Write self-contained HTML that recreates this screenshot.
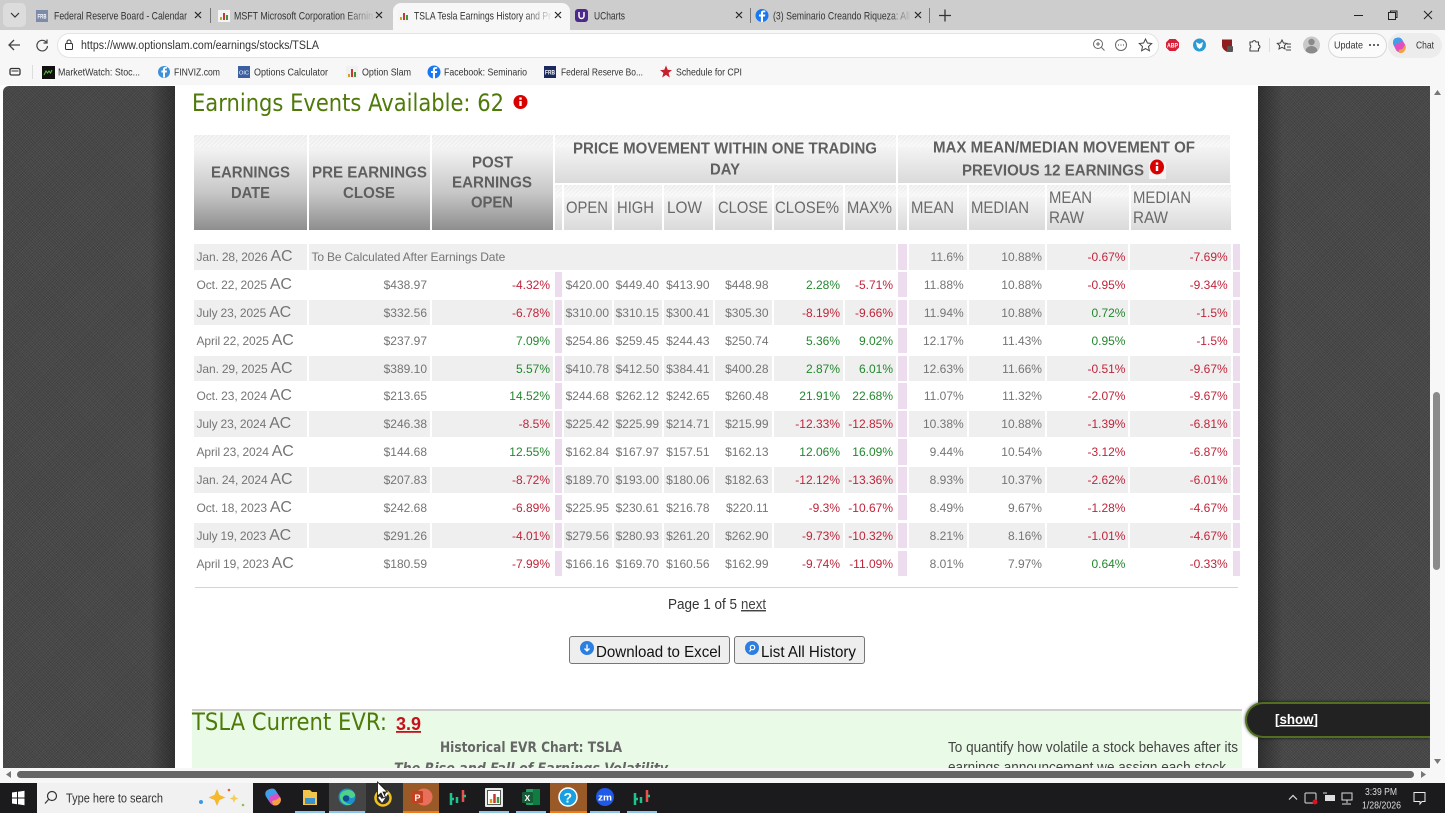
<!DOCTYPE html>
<html><head><meta charset="utf-8"><title>TSLA Tesla Earnings History</title>
<style>
html,body{margin:0;padding:0;width:1445px;height:813px;overflow:hidden;background:#f7f7f7;font-family:"Liberation Sans",sans-serif}
.a{position:absolute}
.dark{background-color:#525252;background-image:repeating-linear-gradient(45deg,rgba(0,0,0,.13) 0 1px,transparent 1px 2px),repeating-linear-gradient(-45deg,rgba(0,0,0,.13) 0 1px,transparent 1px 2px)}
.h{position:absolute;background-image:repeating-linear-gradient(135deg,rgba(255,255,255,.6) 0 1px,rgba(255,255,255,0) 1px 3px),linear-gradient(#ececec,#f5f5f5 22%,#dadada);background-size:100% 12px,100% 100%;background-repeat:no-repeat}
.h.k{background-image:repeating-linear-gradient(135deg,rgba(255,255,255,.6) 0 1px,rgba(255,255,255,0) 1px 3px),linear-gradient(#ececec,#f2f2f2 15%,#c8c8c8 60%,#8e8e8e)}
.r{position:absolute;left:194px;height:25.6px;display:grid;grid-template-columns:113px 121px 121px 6.5px 48.5px 48px 48.5px 57px 69.5px 51px 8.5px 58.2px 76.3px 81.5px 100.2px 7px;column-gap:2px;font-size:12px;line-height:26.6px;color:#757575}
.r span{text-align:right;padding-right:3px;white-space:nowrap;overflow:hidden}
.r .d{text-align:left;padding:0 0 0 2.500px;word-spacing:-.3px;letter-spacing:-.08px}
.r .d b{font-weight:normal;font-size:16px;letter-spacing:-.2px}
.r .p{background:#ecdcee;padding:0}
.r .n{color:#c0243a}.r .g{color:#24862f}
.o span{background:#efefef}.o .p{background:#ecdcee}
.e span{background:#fff}.e .p{background:#ecdcee}
.btn{position:absolute;top:636px;height:26px;background:#eeeeee;border:1px solid #767676;border-radius:3px}
</style></head><body>

<!-- browser chrome -->
<div class="a" style="left:0;top:0;width:1445px;height:30px;background:#cdcdcd"></div>
<div class="a" style="left:3px;top:3px;width:23px;height:24px;background:#dcdcdc;border-radius:5px"></div>
<div class="a" style="left:393px;top:3px;width:177px;height:27px;background:#f7f7f7;border-radius:8px 8px 0 0"></div>
<div class="a" style="left:0;top:30px;width:1445px;height:55px;background:#f7f7f7"></div>
<div class="a" style="left:57px;top:33px;width:1100px;height:23px;background:#fff;border:1px solid #e3e3e3;border-radius:13px"></div>
<div class="a" style="left:1328px;top:33px;width:57px;height:23px;background:#fbfbfb;border:1px solid #d8d8d8;border-radius:13px"></div>
<div class="a" style="left:1388px;top:33px;width:54px;height:25px;background:#ececec;border-radius:13px"></div>

<!-- page backdrop -->
<div class="a" style="left:0;top:85px;width:1430px;height:683px;background:#fff"></div>
<div class="a dark" style="left:3px;top:86px;width:172px;height:682px;border-radius:6px 0 0 0"></div>
<div class="a" style="left:150px;top:86px;width:25px;height:682px;background:linear-gradient(90deg,rgba(0,0,0,0),rgba(0,0,0,.35))"></div>
<div class="a dark" style="left:1258px;top:86px;width:172px;height:682px"></div>
<div class="a" style="left:1258px;top:86px;width:25px;height:682px;background:linear-gradient(270deg,rgba(0,0,0,0),rgba(0,0,0,.35))"></div>

<!-- table header -->
<div class="h k" style="left:194px;top:135px;width:113px;height:95px"></div>
<div class="h k" style="left:309px;top:135px;width:121px;height:95px"></div>
<div class="h k" style="left:432px;top:135px;width:120.5px;height:95px"></div>
<div class="h" style="left:555px;top:135px;width:341px;height:48px"></div>
<div class="h" style="left:898px;top:135px;width:332px;height:48px"></div>
<div class="h" style="left:555px;top:185px;width:6.5px;height:45px"></div>
<div class="h" style="left:563.5px;top:185px;width:48.5px;height:45px"></div>
<div class="h" style="left:614px;top:185px;width:48px;height:45px"></div>
<div class="h" style="left:664px;top:185px;width:48.5px;height:45px"></div>
<div class="h" style="left:714.5px;top:185px;width:57px;height:45px"></div>
<div class="h" style="left:773.5px;top:185px;width:69.5px;height:45px"></div>
<div class="h" style="left:845px;top:185px;width:51px;height:45px"></div>
<div class="h" style="left:898px;top:185px;width:8.5px;height:45px"></div>
<div class="h" style="left:908.5px;top:185px;width:58px;height:45px"></div>
<div class="h" style="left:968.7px;top:185px;width:76px;height:45px"></div>
<div class="h" style="left:1047px;top:185px;width:81.5px;height:45px"></div>
<div class="h" style="left:1130.5px;top:185px;width:100px;height:45px"></div>

<!-- table rows -->
<div class="r o" style="top:244px"><span class="d">Jan. 28, 2026 <b>AC</b></span><span class="d" style="grid-column:2 / span 9">To Be Calculated After Earnings Date</span><span class="p"></span><span>11.6%</span><span>10.88%</span><span class="n">-0.67%</span><span class="n">-7.69%</span><span class="p"></span></div>
<div class="r e" style="top:271.9px"><span class="d">Oct. 22, 2025 <b>AC</b></span><span>$438.97</span><span class="n">-4.32%</span><span class="p"></span><span>$420.00</span><span>$449.40</span><span>$413.90</span><span>$448.98</span><span class="g">2.28%</span><span class="n">-5.71%</span><span class="p"></span><span>11.88%</span><span>10.88%</span><span class="n">-0.95%</span><span class="n">-9.34%</span><span class="p"></span></div>
<div class="r o" style="top:299.7px"><span class="d">July 23, 2025 <b>AC</b></span><span>$332.56</span><span class="n">-6.78%</span><span class="p"></span><span>$310.00</span><span>$310.15</span><span>$300.41</span><span>$305.30</span><span class="n">-8.19%</span><span class="n">-9.66%</span><span class="p"></span><span>11.94%</span><span>10.88%</span><span class="g">0.72%</span><span class="n">-1.5%</span><span class="p"></span></div>
<div class="r e" style="top:327.6px"><span class="d">April 22, 2025 <b>AC</b></span><span>$237.97</span><span class="g">7.09%</span><span class="p"></span><span>$254.86</span><span>$259.45</span><span>$244.43</span><span>$250.74</span><span class="g">5.36%</span><span class="g">9.02%</span><span class="p"></span><span>12.17%</span><span>11.43%</span><span class="g">0.95%</span><span class="n">-1.5%</span><span class="p"></span></div>
<div class="r o" style="top:355.5px"><span class="d">Jan. 29, 2025 <b>AC</b></span><span>$389.10</span><span class="g">5.57%</span><span class="p"></span><span>$410.78</span><span>$412.50</span><span>$384.41</span><span>$400.28</span><span class="g">2.87%</span><span class="g">6.01%</span><span class="p"></span><span>12.63%</span><span>11.66%</span><span class="n">-0.51%</span><span class="n">-9.67%</span><span class="p"></span></div>
<div class="r e" style="top:383.4px"><span class="d">Oct. 23, 2024 <b>AC</b></span><span>$213.65</span><span class="g">14.52%</span><span class="p"></span><span>$244.68</span><span>$262.12</span><span>$242.65</span><span>$260.48</span><span class="g">21.91%</span><span class="g">22.68%</span><span class="p"></span><span>11.07%</span><span>11.32%</span><span class="n">-2.07%</span><span class="n">-9.67%</span><span class="p"></span></div>
<div class="r o" style="top:411.2px"><span class="d">July 23, 2024 <b>AC</b></span><span>$246.38</span><span class="n">-8.5%</span><span class="p"></span><span>$225.42</span><span>$225.99</span><span>$214.71</span><span>$215.99</span><span class="n">-12.33%</span><span class="n">-12.85%</span><span class="p"></span><span>10.38%</span><span>10.88%</span><span class="n">-1.39%</span><span class="n">-6.81%</span><span class="p"></span></div>
<div class="r e" style="top:439.1px"><span class="d">April 23, 2024 <b>AC</b></span><span>$144.68</span><span class="g">12.55%</span><span class="p"></span><span>$162.84</span><span>$167.97</span><span>$157.51</span><span>$162.13</span><span class="g">12.06%</span><span class="g">16.09%</span><span class="p"></span><span>9.44%</span><span>10.54%</span><span class="n">-3.12%</span><span class="n">-6.87%</span><span class="p"></span></div>
<div class="r o" style="top:467px"><span class="d">Jan. 24, 2024 <b>AC</b></span><span>$207.83</span><span class="n">-8.72%</span><span class="p"></span><span>$189.70</span><span>$193.00</span><span>$180.06</span><span>$182.63</span><span class="n">-12.12%</span><span class="n">-13.36%</span><span class="p"></span><span>8.93%</span><span>10.37%</span><span class="n">-2.62%</span><span class="n">-6.01%</span><span class="p"></span></div>
<div class="r e" style="top:494.8px"><span class="d">Oct. 18, 2023 <b>AC</b></span><span>$242.68</span><span class="n">-6.89%</span><span class="p"></span><span>$225.95</span><span>$230.61</span><span>$216.78</span><span>$220.11</span><span class="n">-9.3%</span><span class="n">-10.67%</span><span class="p"></span><span>8.49%</span><span>9.67%</span><span class="n">-1.28%</span><span class="n">-4.67%</span><span class="p"></span></div>
<div class="r o" style="top:522.7px"><span class="d">July 19, 2023 <b>AC</b></span><span>$291.26</span><span class="n">-4.01%</span><span class="p"></span><span>$279.56</span><span>$280.93</span><span>$261.20</span><span>$262.90</span><span class="n">-9.73%</span><span class="n">-10.32%</span><span class="p"></span><span>8.21%</span><span>8.16%</span><span class="n">-1.01%</span><span class="n">-4.67%</span><span class="p"></span></div>
<div class="r e" style="top:550.6px"><span class="d">April 19, 2023 <b>AC</b></span><span>$180.59</span><span class="n">-7.99%</span><span class="p"></span><span>$166.16</span><span>$169.70</span><span>$160.56</span><span>$162.99</span><span class="n">-9.74%</span><span class="n">-11.09%</span><span class="p"></span><span>8.01%</span><span>7.97%</span><span class="g">0.64%</span><span class="n">-0.33%</span><span class="p"></span></div>

<div class="a" style="left:195px;top:587px;width:1043px;height:1px;background:#d4d4d4"></div>
<div class="btn" style="left:569px;width:159px"></div>
<div class="btn" style="left:734px;width:129px"></div>

<!-- EVR section -->
<div class="a" style="left:192px;top:709px;width:1050px;height:59px;background:#e9fbe7;border-top:2px solid #cfcfcf;box-sizing:border-box"></div>

<!-- show widget -->
<div class="a" style="left:1245px;top:702px;width:185px;height:36px;box-sizing:border-box;background:#222;border:2.5px solid #51701f;border-right:0;border-radius:18px 0 0 18px;box-shadow:0 0 3px rgba(0,0,0,.7)"></div>

<!-- lower chrome -->
<div class="a" style="left:0;top:768px;width:1445px;height:15px;background:#f7f7f7"></div>
<div class="a" style="left:1430px;top:85px;width:15px;height:698px;background:#f7f7f7"></div>
<div class="a" style="left:17px;top:771px;width:1397px;height:7px;background:#666;border-radius:4px"></div>
<div class="a" style="left:1433px;top:392px;width:7px;height:178px;background:#8a8a8a;border-radius:4px"></div>
<div class="a" style="left:0;top:783px;width:1445px;height:30px;background:#1b1b1d"></div>
<div class="a" style="left:37px;top:783px;width:216px;height:30px;background:#f1f1f1"></div>
<div class="a" style="left:329px;top:783px;width:37px;height:30px;background:#454545"></div>
<div class="a" style="left:366px;top:783px;width:37px;height:30px;background:#2f2f2f"></div>
<div class="a" style="left:403px;top:783px;width:36px;height:30px;background:#9a5a28"></div>
<div class="a" style="left:550px;top:783px;width:37px;height:30px;background:#9a5a28"></div>

<!-- all text and icons -->
<svg class="a" style="left:0;top:0" width="1445" height="813" viewBox="0 0 1445 813" font-family="'Liberation Sans',sans-serif">
<defs>
<clipPath id="cl"><rect x="0" y="86" width="1430" height="682"/></clipPath>
<linearGradient id="f1" x1="0" x2="1"><stop offset=".8" stop-color="#333"/><stop offset="1" stop-color="#333" stop-opacity=".1"/></linearGradient>
<linearGradient id="f2" x1="0" x2="1"><stop offset=".85" stop-color="#333"/><stop offset="1" stop-color="#333" stop-opacity=".1"/></linearGradient>
<linearGradient id="cp" x1="0" y1="0" x2="1" y2="1"><stop offset="0" stop-color="#3ea0e8"/><stop offset=".5" stop-color="#d14fd0"/><stop offset="1" stop-color="#f2a23c"/></linearGradient>
</defs>

<!-- tabs -->
<g font-size="11" fill="#333">
<path d="M11 13l4 4 4-4" fill="none" stroke="#333" stroke-width="1.2"/>
<rect x="36" y="10" width="12" height="12" fill="#7d8aa8"/><text x="37.5" y="18.500" font-size="6" font-weight="bold" fill="#fff" textLength="9" lengthAdjust="spacingAndGlyphs">FRB</text>
<text x="54" y="19.500" textLength="133" lengthAdjust="spacingAndGlyphs">Federal Reserve Board - Calendar</text>
<path d="M195 12l6 6M201 12l-6 6M376 12l6 6M382 12l-6 6M555 12l6 6M561 12l-6 6M736 12l6 6M742 12l-6 6M915 12l6 6M921 12l-6 6" stroke="#222" stroke-width="1.2"/>
<path d="M210.500 8v15M750.500 8v15M929.500 8v15" stroke="#777"/>
<rect x="218" y="10" width="12" height="12" fill="#f4f4f4"/><path d="M221 20v-3" stroke-width="2" stroke="#d8a020"/><path d="M224 20v-7" stroke="#c33" stroke-width="2"/><path d="M227 20v-5" stroke="#3a9a3a" stroke-width="2"/>
<text x="234" y="19.500" textLength="139" lengthAdjust="spacingAndGlyphs" fill="url(#f1)">MSFT Microsoft Corporation Earnin</text>
<rect x="398" y="10" width="12" height="12" fill="#f4f4f4"/><path d="M401 20v-3" stroke="#d8a020" stroke-width="2"/><path d="M404 20v-7" stroke="#c33" stroke-width="2"/><path d="M407 20v-5" stroke="#3a9a3a" stroke-width="2"/>
<text x="414" y="19.500" textLength="137" lengthAdjust="spacingAndGlyphs" fill="url(#f1)">TSLA Tesla Earnings History and Pr</text>
<rect x="575" y="9" width="13" height="13" rx="3" fill="#4b2a8c"/><path d="M579 12v4a2.500 2.500 0 0 0 5 0v-4" fill="none" stroke="#fff" stroke-width="1.500"/>
<text x="594" y="19.500" textLength="31" lengthAdjust="spacingAndGlyphs">UCharts</text>
<circle cx="762" cy="15.500" r="6.500" fill="#1877f2"/><path d="M763 22v-5.500h2l.3-2H763v-1.200c0-.7.3-1 1-1h1.300V10.500h-1.800c-1.800 0-2.600 1-2.600 2.600v1.400H759v2h1.900V22z" fill="#fff"/>
<text x="773" y="19.500" textLength="137" lengthAdjust="spacingAndGlyphs" fill="url(#f2)">(3) Seminario Creando Riqueza: All</text>
<path d="M945 9.500v12M939 15.500h12" stroke="#333" stroke-width="1.300"/>
<path d="M1354 15.500h9" stroke="#222"/>
<rect x="1388.500" y="12.500" width="7" height="7" fill="none" stroke="#222"/><path d="M1390.500 12.500v-1.500h6.500v6.500h-1.500" fill="none" stroke="#222"/>
<path d="M1424 11l8 8M1432 11l-8 8" stroke="#222"/>
</g>

<!-- toolbar -->
<path d="M20 45H9M14 40l-5 5 5 5" fill="none" stroke="#444" stroke-width="1.300"/>
<path d="M46.500 42.500A5.300 5.300 0 1 0 47.500 46M47 39.500v3.500h-3.500" fill="none" stroke="#444" stroke-width="1.200"/>
<rect x="65.500" y="43.500" width="7" height="6" rx="1" fill="none" stroke="#333"/><path d="M67 43.500v-1.500a2 2 0 0 1 4 0v1.500" fill="none" stroke="#333"/>
<text x="81" y="49" font-size="11.500" fill="#333" textLength="238" lengthAdjust="spacingAndGlyphs">https://www.optionslam.com/earnings/stocks/TSLA</text>
<circle cx="1098" cy="44" r="4.500" fill="none" stroke="#666"/><path d="M1101.500 47.500l3 3M1098 42v4M1096 44h4" stroke="#666"/>
<circle cx="1121" cy="45" r="5.500" fill="none" stroke="#666"/><path d="M1118 45h1M1120.500 45h1M1123 45h1" stroke="#444"/>
<path d="M1145.500 39l1.900 4 4.300.5-3.200 3 .9 4.300-3.900-2.200-3.900 2.200.9-4.300-3.200-3 4.300-.5z" fill="none" stroke="#444"/>
<path d="M1169.500 39h6l3.500 3.500v5l-3.500 3.500h-6l-3.500-3.500v-5z" fill="#d81f38"/><text x="1167" y="47.500" font-size="6" font-weight="bold" fill="#fff" textLength="11" lengthAdjust="spacingAndGlyphs">ABP</text>
<circle cx="1199.500" cy="45" r="6.500" fill="#2b9ad6"/><path d="M1196 42l3.500 2 3.500-2-1 5-2.500 2-2.500-2z" fill="#fff"/>
<path d="M1222 39.500h10v6c0 3-2.500 5-5 6.500-2.500-1.500-5-3.500-5-6.500z" fill="#8e1d1d"/><rect x="1227" y="46" width="6" height="6" rx="1" fill="#555"/>
<path d="M1250 42h2.500a1.800 1.800 0 0 1 3.500 0h2.500v3a1.800 1.800 0 0 1 0 3.500v2.500h-8.500v-3a1.800 1.800 0 0 0 0-3z" fill="none" stroke="#444" stroke-width="1.100"/>
<path d="M1269.500 38v14" stroke="#ddd"/>
<path d="M1282 40l1.500 3 3.200.4-2.300 2.200.6 3.300-3-1.600-3 1.600.6-3.300-2.300-2.200 3.200-.4zM1287 44h4M1287 47h4M1286 50h5" fill="none" stroke="#444"/>
<circle cx="1311.500" cy="45" r="8.500" fill="#c9c9c9"/><circle cx="1311.500" cy="42" r="3.200" fill="#8a8a8a"/><path d="M1305.500 51a6 5 0 0 1 12 0 8.500 8.500 0 0 1-12 0z" fill="#8a8a8a"/>
<text x="1334" y="48.500" font-size="10.500" fill="#333" textLength="29" lengthAdjust="spacingAndGlyphs">Update</text>
<path d="M1369 45h2M1373 45h2M1377 45h2" stroke="#333" stroke-width="1.500"/>
<path d="M1396 38c3-1 5 0 6 1.500l3 5c1 2 1 4-.5 6-1 1.500-3 2.500-5 2-1.500-.5-2.500-1-3.500-2.500l-2.500-5c-1-2-.5-6 2.500-7z" fill="#e24fc0"/><path d="M1396 38c3-1 5 0 6 1.500l1 2-7 2-1.500 3-1-2c-1-2-.5-6 2.500-6.500z" fill="#3ea0e8"/><path d="M1405 45c1 2 1 4-.5 6-1 1.500-3 2.500-5 2l-1-3 4-1z" fill="#f2a23c"/>
<text x="1416" y="48.500" font-size="10.500" fill="#333" textLength="18" lengthAdjust="spacingAndGlyphs">Chat</text>

<!-- bookmarks -->
<g font-size="10.500" fill="#333">
<rect x="10" y="68.500" width="10" height="6.500" rx="1.500" fill="none" stroke="#333" stroke-width="1.300"/><path d="M11.500 71h7" stroke="#333"/>
<path d="M32.500 65v14" stroke="#ddd"/>
<rect x="42" y="66" width="13" height="13" fill="#111"/><path d="M44 75l2-4 1.500 2 1.500-2 1.500 2 1.500-3" fill="none" stroke="#5ac13a"/>
<text x="58" y="75.500" textLength="82" lengthAdjust="spacingAndGlyphs">MarketWatch: Stoc...</text>
<circle cx="164" cy="72" r="6" fill="#3f8fd9"/><path d="M165 77.500v-5h1.700l.3-2h-2v-1c0-.7.3-1 1-1h1v-1.500h-1.500c-1.700 0-2.500 1-2.500 2.400v1.100h-1.600v2h1.600v5z" fill="#fff"/>
<text x="174" y="75.500" textLength="46" lengthAdjust="spacingAndGlyphs">FINVIZ.com</text>
<rect x="238" y="66" width="12" height="12" fill="#3c5fa0"/><text x="239" y="74.500" font-size="5.500" fill="#fff" textLength="10" lengthAdjust="spacingAndGlyphs">OIC</text>
<text x="254" y="75.500" textLength="74" lengthAdjust="spacingAndGlyphs">Options Calculator</text>
<rect x="346" y="66" width="12" height="12" fill="#f1f1f1"/><path d="M349 77v-3" stroke="#d8a020" stroke-width="2"/><path d="M352 77v-8" stroke="#c33" stroke-width="2"/><path d="M355 77v-5" stroke="#3a9a3a" stroke-width="2"/>
<text x="362" y="75.500" textLength="49" lengthAdjust="spacingAndGlyphs">Option Slam</text>
<circle cx="434" cy="72" r="6.500" fill="#1877f2"/><path d="M435 78.500v-5.500h1.900l.3-2H435v-1.200c0-.7.3-1 1-1h1.200v-1.700h-1.700c-1.800 0-2.600 1-2.600 2.600v1.300h-1.800v2h1.800v5.500z" fill="#fff"/>
<text x="444" y="75.500" textLength="83" lengthAdjust="spacingAndGlyphs">Facebook: Seminario</text>
<rect x="544" y="66" width="12" height="12" fill="#1a2a5e"/><text x="545" y="74.500" font-size="6" font-weight="bold" fill="#fff" textLength="10" lengthAdjust="spacingAndGlyphs">FRB</text>
<text x="561" y="75.500" textLength="82" lengthAdjust="spacingAndGlyphs">Federal Reserve Bo...</text>
<path d="M666 65.500l1.700 4.300 4.300.3-3.400 2.800 1.200 4.600-3.800-2.600-3.800 2.600 1.200-4.600-3.400-2.800 4.300-.3z" fill="#c8202c"/>
<text x="676" y="75.500" textLength="66" lengthAdjust="spacingAndGlyphs">Schedule for CPI</text>
</g>

<!-- page headings -->
<g clip-path="url(#cl)">
<text x="192" y="111" font-family="'DejaVu Sans',sans-serif" font-size="24" fill="#4f7a0a" textLength="312" lengthAdjust="spacingAndGlyphs">Earnings Events Available: 62</text>
<circle cx="520.500" cy="102" r="7" fill="#d90000"/><rect x="519.300" y="101" width="2.400" height="5" fill="#fff"/><rect x="519.300" y="97.500" width="2.400" height="2.200" fill="#fff"/>

<g font-size="15.500" font-weight="bold" fill="#5f5f5f">
<text x="211" y="177.500" textLength="79" lengthAdjust="spacingAndGlyphs">EARNINGS</text>
<text x="231" y="198" textLength="39" lengthAdjust="spacingAndGlyphs">DATE</text>
<text x="312" y="177.500" textLength="115" lengthAdjust="spacingAndGlyphs">PRE EARNINGS</text>
<text x="343" y="198" textLength="52" lengthAdjust="spacingAndGlyphs">CLOSE</text>
<text x="472" y="167.500" textLength="41" lengthAdjust="spacingAndGlyphs">POST</text>
<text x="452" y="187.500" textLength="80" lengthAdjust="spacingAndGlyphs">EARNINGS</text>
<text x="471" y="207.500" textLength="42" lengthAdjust="spacingAndGlyphs">OPEN</text>
<text x="573" y="153.500" textLength="304" lengthAdjust="spacingAndGlyphs">PRICE MOVEMENT WITHIN ONE TRADING</text>
<text x="710" y="174.500" textLength="30" lengthAdjust="spacingAndGlyphs">DAY</text>
<text x="933" y="152.500" textLength="262" lengthAdjust="spacingAndGlyphs">MAX MEAN/MEDIAN MOVEMENT OF</text>
<text x="962" y="175.500" textLength="182" lengthAdjust="spacingAndGlyphs">PREVIOUS 12 EARNINGS</text>
</g>
<rect x="1149" y="162" width="17" height="17" fill="#f4f4f4"/>
<ellipse cx="1157" cy="167" rx="7" ry="7.500" fill="#d90000"/><rect x="1155.800" y="166" width="2.400" height="5" fill="#fff"/><rect x="1155.800" y="162.500" width="2.400" height="2.200" fill="#fff"/>
<g font-size="16.500" fill="#6a6a6a">
<text x="566" y="213" textLength="42" lengthAdjust="spacingAndGlyphs">OPEN</text>
<text x="617" y="213" textLength="37" lengthAdjust="spacingAndGlyphs">HIGH</text>
<text x="667" y="213" textLength="35" lengthAdjust="spacingAndGlyphs">LOW</text>
<text x="718" y="213" textLength="50" lengthAdjust="spacingAndGlyphs">CLOSE</text>
<text x="775" y="213" textLength="64" lengthAdjust="spacingAndGlyphs">CLOSE%</text>
<text x="847" y="213" textLength="45" lengthAdjust="spacingAndGlyphs">MAX%</text>
<text x="911" y="213" textLength="43" lengthAdjust="spacingAndGlyphs">MEAN</text>
<text x="971" y="213" textLength="58" lengthAdjust="spacingAndGlyphs">MEDIAN</text>
<text x="1049" y="203" textLength="43" lengthAdjust="spacingAndGlyphs">MEAN</text>
<text x="1049" y="223" textLength="35" lengthAdjust="spacingAndGlyphs">RAW</text>
<text x="1133" y="203" textLength="58" lengthAdjust="spacingAndGlyphs">MEDIAN</text>
<text x="1133" y="223" textLength="35" lengthAdjust="spacingAndGlyphs">RAW</text>
</g>

<text x="668" y="609" font-size="14.500" fill="#333" textLength="69" lengthAdjust="spacingAndGlyphs">Page 1 of 5</text>
<text x="741" y="609" font-size="14.500" fill="#444" text-decoration="underline" textLength="25" lengthAdjust="spacingAndGlyphs">next</text>

<circle cx="587" cy="648" r="7" fill="#2b7fe0"/><path d="M587 644.500v6M584.500 648.500l2.500 2.500 2.500-2.500" fill="none" stroke="#fff" stroke-width="1.300"/>
<text x="596" y="657" font-size="16" fill="#111" textLength="125" lengthAdjust="spacingAndGlyphs">Download to Excel</text>
<circle cx="752" cy="648" r="7" fill="#2b7fe0"/><circle cx="752.500" cy="647.500" r="2.200" fill="none" stroke="#fff" stroke-width="1.200"/><path d="M751 649.500l-1.500 2" stroke="#fff" stroke-width="1.200"/>
<text x="761" y="657" font-size="16" fill="#111" textLength="95" lengthAdjust="spacingAndGlyphs">List All History</text>

<text x="192" y="730" font-family="'DejaVu Sans',sans-serif" font-size="24" fill="#4f7a0a" textLength="195" lengthAdjust="spacingAndGlyphs">TSLA Current EVR:</text>
<text x="396" y="730" font-size="18" font-weight="bold" fill="#c8101a" text-decoration="underline" textLength="25" lengthAdjust="spacingAndGlyphs">3.9</text>
<text x="440" y="752" font-family="'DejaVu Sans',sans-serif" font-size="14" font-weight="bold" fill="#666" textLength="182" lengthAdjust="spacingAndGlyphs">Historical EVR Chart: TSLA</text>
<text x="394" y="773" font-family="'DejaVu Sans',sans-serif" font-size="14" font-style="italic" font-weight="bold" fill="#666" textLength="274" lengthAdjust="spacingAndGlyphs">The Rise and Fall of Earnings Volatility</text>
<text x="948" y="752" font-size="14.500" fill="#444" textLength="290" lengthAdjust="spacingAndGlyphs">To quantify how volatile a stock behaves after its</text>
<text x="948" y="772" font-size="14.500" fill="#444" textLength="278" lengthAdjust="spacingAndGlyphs">earnings announcement we assign each stock</text>
<text x="1275" y="724" font-size="14" font-weight="bold" fill="#fff" textLength="43" lengthAdjust="spacingAndGlyphs">[<tspan text-decoration="underline">show</tspan>]</text>
</g>

<!-- scroll arrows -->
<path d="M1437.500 90l-3.500 5h7zM1437.500 764l-3.500-5h7z" fill="#777"/>
<path d="M6 774.500l5-3.500v7zM1426 774.500l-5-3.500v7z" fill="#777"/>

<!-- taskbar -->
<path d="M12 792.500l5-.7v5.700h-5zM18 791.700l6.500-.9v6.700H18zM12 798.500h5v5.700l-5-.7zM18 798.500h6.500v6.700l-6.500-.9z" fill="#fff"/>
<circle cx="52" cy="796" r="4.500" fill="none" stroke="#333" stroke-width="1.200"/><path d="M48.500 799.500l-3.500 4" stroke="#333" stroke-width="1.200"/>
<text x="66" y="802.500" font-size="12.500" fill="#333" textLength="97" lengthAdjust="spacingAndGlyphs">Type here to search</text>
<path d="M217 789l2.500 6 6 2.500-6 2.500-2.500 6-2.500-6-6-2.500 6-2.500z" fill="#f5b82e"/><path d="M234 794l1.300 3.200 3.200 1.300-3.200 1.300-1.300 3.200-1.300-3.200-3.200-1.300 3.200-1.300z" fill="#f5cc5e"/><circle cx="229" cy="790" r="1.300" fill="#e0603c"/><circle cx="201" cy="802" r="2" fill="#3a9ae8"/><circle cx="243" cy="805" r="1.300" fill="#8cc34a"/>
<path d="M270 789c3-1 5 0 6 2l4 6c1.500 2.500 1 5-1 7-1.500 1.500-4 2-6 1-1.500-.5-2.500-1.500-3.500-3l-3.500-6c-1.500-3-.5-6 4-7z" fill="#d94fc8"/><path d="M270 789c3-1 5 0 6 2l1.500 2.500-7 2-2 5-2.500-4c-1.500-3-.5-6 4-7.500z" fill="#3ea0e8"/><path d="M280 797c1.500 2.500 1 5-1 7-1.500 1.500-4 2-6 1l-1-4 5-1.500z" fill="#f2a23c"/>
<path d="M303 790h7l2 2h5v13h-14z" fill="#f2c54a"/><rect x="305" y="798" width="10" height="6" fill="#3d93c9"/>
<circle cx="347" cy="797" r="8.500" fill="#1e8ed0"/><path d="M340 795c2-6 12-7 15-1 .7 2-1 4-3.500 4-2 0-2.500-1-2-2-3-2-7 2-4 6 1.500 2 4 2.500 6.500 1.500-3 3.500-13 1-12-8.500z" fill="#4fd18a"/><circle cx="346" cy="798.500" r="3.200" fill="#0e4f8c"/>
<circle cx="383" cy="798" r="7.500" fill="none" stroke="#f2c21c" stroke-width="2.500"/><path d="M379 797l3 4 6-9" fill="none" stroke="#fff" stroke-width="2"/>
<circle cx="424" cy="797" r="8.500" fill="#e8705a"/><rect x="412" y="791" width="11" height="12" rx="1" fill="#c4401f"/><text x="414.500" y="801" font-size="9" font-weight="bold" fill="#fff">P</text>
<g stroke-width="2.500"><path d="M451 793v12M457 797v6" stroke="#20c48a"/><path d="M463 790v12" stroke="#e8504c"/><path d="M451 799h3M463 796h3" stroke="#20c48a"/></g>
<rect x="485" y="788" width="18" height="19" rx="1" fill="#e8e8e8"/><rect x="487.500" y="790.500" width="13" height="14" fill="#fff" stroke="#555"/><path d="M491 803v-4" stroke="#d8a020" stroke-width="2.500"/><path d="M494.500 803v-9" stroke="#c33" stroke-width="2.500"/><path d="M498 803v-6" stroke="#3a9a3a" stroke-width="2.500"/>
<rect x="526" y="789" width="14" height="16" rx="1" fill="#20a366"/><rect x="533" y="789" width="7" height="16" fill="#107c41"/><rect x="522" y="792" width="11" height="11" rx="1" fill="#185c37"/><text x="524.500" y="801" font-size="8.500" font-weight="bold" fill="#fff">X</text>
<circle cx="568" cy="797" r="9" fill="#19a0e0" stroke="#fff" stroke-width="1.500"/><text x="563.500" y="802.500" font-size="14" font-weight="bold" fill="#fff">?</text>
<circle cx="605" cy="797" r="9" fill="#2058e8"/><text x="598" y="800.500" font-size="9.500" font-weight="bold" fill="#fff" textLength="14" lengthAdjust="spacingAndGlyphs">zm</text>
<g stroke-width="2.500"><path d="M635 793v12M641 797v6" stroke="#20c48a"/><path d="M647 790v12" stroke="#e8504c"/><path d="M635 799h3M647 796h3" stroke="#20c48a"/></g>
<path d="M295 812h30M329 812h36M479 812h30M516 812h30M590 812h30M627 812h30" stroke="#8cc4ea" stroke-width="2"/>
<path d="M403 812h36M550 812h37" stroke="#f07a18" stroke-width="2"/>

<path d="M1289 799.500l4-4 4 4" fill="none" stroke="#ddd" stroke-width="1.200"/>
<rect x="1305" y="793" width="11" height="10" rx="1" fill="none" stroke="#ddd"/><circle cx="1315" cy="802" r="2.500" fill="#e01020"/>
<rect x="1325" y="795" width="10" height="6" fill="#ddd"/><path d="M1323 793h4" stroke="#ddd"/>
<rect x="1342" y="793" width="10" height="7" fill="none" stroke="#ddd"/><path d="M1347 800v3M1342 804h9" stroke="#ddd"/>
<text x="1365" y="795" font-size="10.500" fill="#ddd" textLength="32" lengthAdjust="spacingAndGlyphs">3:39 PM</text>
<text x="1362" y="808.500" font-size="10.500" fill="#ddd" textLength="39" lengthAdjust="spacingAndGlyphs">1/28/2026</text>
<path d="M1414 792.500h11v9h-3l-2 2.500v-2.500h-6z" fill="none" stroke="#eee"/>

<!-- cursor -->
<path d="M377.500 782v14l3.500-3 2.500 5 2-1-2.500-5h4.500z" fill="#fff" stroke="#111" stroke-width=".8"/>
</svg>
</body></html>
